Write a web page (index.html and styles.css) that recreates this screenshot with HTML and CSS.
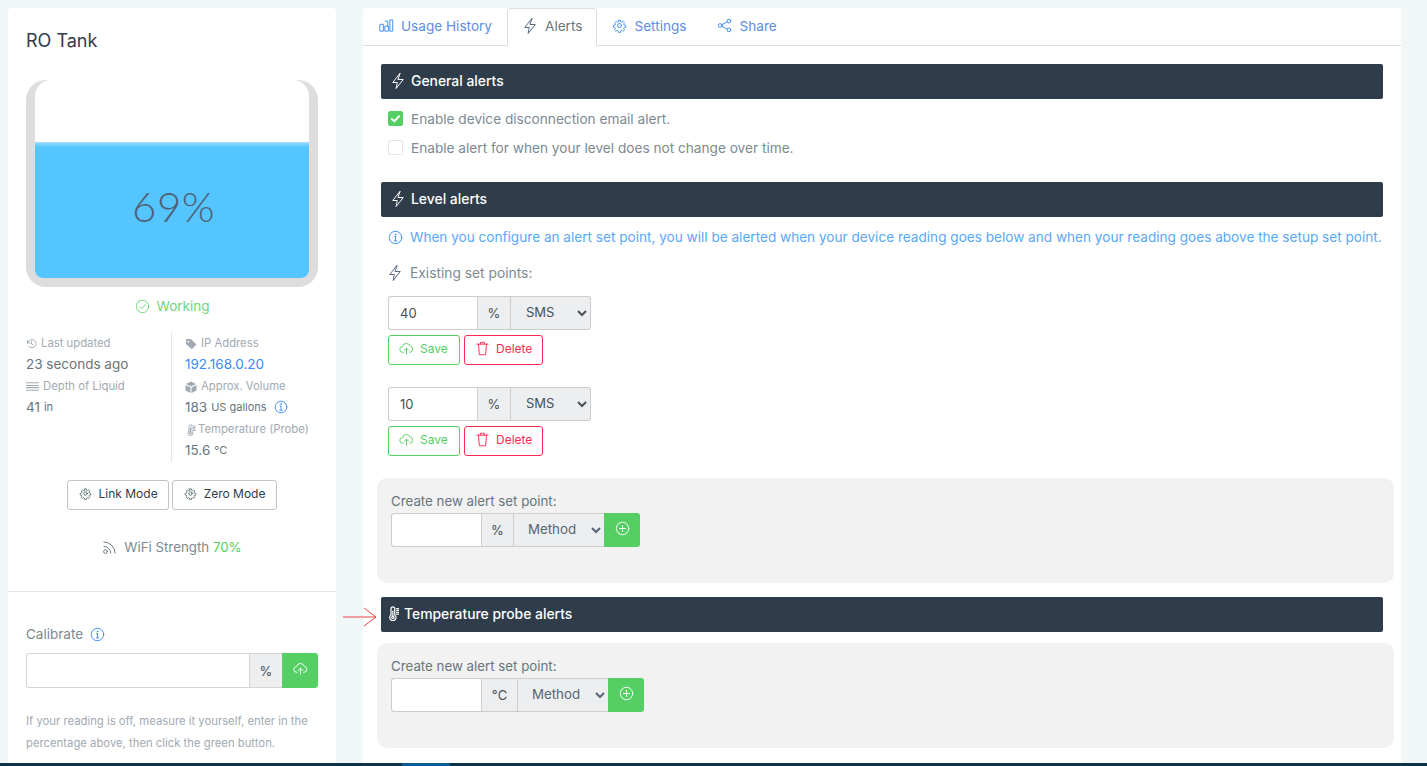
FILE: index.html
```html
<!DOCTYPE html>
<html lang="en">
<head>
<meta charset="utf-8">
<title>RO Tank</title>
<link rel="stylesheet" href="styles.css">
</head>
<body>
<svg class="sprite" width="0" height="0" aria-hidden="true">
  <defs>
    <symbol id="zap" viewBox="0 0 24 24"><path d="M14.500 2 5 14h6l-1.500 8L19 10h-6.500z"/></symbol>
    <symbol id="gear" viewBox="0 0 24 24"><circle cx="12" cy="12" r="3.200"/><path d="M10.300 2.500h3.400l.5 2.900 1.900.8 2.400-1.700 2.400 2.400-1.700 2.400.8 1.900 2.900.5v3.400l-2.900.5-.8 1.900 1.700 2.400-2.400 2.400-2.400-1.700-1.900.8-.5 2.900h-3.400l-.5-2.900-1.900-.8-2.400 1.700-2.400-2.400 1.700-2.400-.8-1.900-2.900-.5v-3.400l2.900-.5.8-1.900L3.700 6.800l2.400-2.400 2.400 1.700 1.900-.8z" transform="translate(1.200 1.200) scale(.9)"/></symbol>
    <symbol id="info" viewBox="0 0 24 24"><circle cx="12" cy="12" r="10"/><path d="M12 11v6M10 17.500h4M10.500 10.500H12"/><circle cx="12" cy="7" r=".6"/></symbol>
    <symbol id="cloud" viewBox="0 0 24 24"><path d="M7 18H6a4.500 4.500 0 0 1-.5-9A6.500 6.500 0 0 1 18 8.500a4.800 4.800 0 0 1 0 9.500h-1"/><path d="M12 21v-9M8.500 15l3.500-3.500 3.500 3.500"/></symbol>
    <symbol id="therm" viewBox="0 0 24 24"><path d="M8 14.500V4.500a3 3 0 0 1 6 0v10a5 5 0 1 1-6 0z"/><circle cx="11" cy="18.500" r="1.800"/><path d="M11 8v9M17 4h3M17 7h3M17 10h3M17 13h3"/></symbol>
  </defs>
</svg>
<div class="layout">
  <aside class="card side">
    <h1 class="title">RO Tank</h1>
    <div class="tank">
      <div class="tank-inner">
        <div class="tank-air"></div>
        <div class="tank-water"><span class="tank-value">69%</span></div>
      </div>
    </div>
    <div class="status">
      <svg class="ic ic-15" viewBox="0 0 24 24"><circle cx="12" cy="12" r="10"/><path d="m7.500 12.500 3 3 6-6.500"/></svg>
      <span>Working</span>
    </div>
    <div class="stats">
      <div class="stat-col">
        <div class="stat-label">
          <svg class="ic ic-11 thick" viewBox="0 0 24 24"><path d="M3 5v6h6"/><path d="M4 11a9 9 0 1 1 2 7"/><path d="M12 7v6l4 2"/></svg>
          Last updated</div>
        <div class="stat-value">23 seconds ago</div>
        <div class="stat-label">
          <svg class="ic ic-13 thick" viewBox="0 0 24 24"><path d="M1 5h22M1 10h22M1 14h22M1 19h22"/></svg>
          Depth of Liquid</div>
        <div class="stat-value">41 <small>in</small></div>
      </div>
      <div class="stat-col stat-right">
        <div class="stat-label">
          <svg class="ic-fill ic-12" viewBox="0 0 24 24"><path d="M2 2h10l11 11-9.500 9.500L2 12zM7 5.500A1.800 1.800 0 1 0 7 9a1.800 1.800 0 0 0 0-3.500z"/></svg>
          IP Address</div>
        <div class="stat-value link">192.168.0.20</div>
        <div class="stat-label">
          <svg class="ic-fill ic-12" viewBox="0 0 24 24"><path d="M12 1 2 6l10 5 10-5zM1 8v11l10 5V13zM23 8v11l-10 5V13z"/></svg>
          Approx. Volume</div>
        <div class="stat-value">183 <small>US gallons</small>
          <svg class="ic ic-14 blue info-gap"><use href="#info"/></svg></div>
        <div class="stat-label tight">
          <svg class="ic ic-12 thick"><use href="#therm"/></svg>
          Temperature (Probe)</div>
        <div class="stat-value">15.6 <small>°C</small></div>
      </div>
    </div>
    <div class="mode-row">
      <button class="mode-btn" type="button"><svg class="ic ic-13 dark"><use href="#gear"/></svg>Link Mode</button>
      <button class="mode-btn" type="button"><svg class="ic ic-13 dark"><use href="#gear"/></svg>Zero Mode</button>
    </div>
    <div class="wifi">
      <svg class="ic ic-15 grey" viewBox="0 0 24 24"><circle cx="5.500" cy="18.500" r="3"/><path d="M3 10a11 11 0 0 1 11 11M3 3a18 18 0 0 1 18 18"/></svg>
      <span>WiFi Strength <b class="good">70%</b></span>
    </div>
    <hr class="side-rule">
    <div class="calibrate">
      <div class="cal-label">Calibrate <svg class="ic ic-15 blue"><use href="#info"/></svg></div>
      <div class="cal-group">
        <input class="cal-input" type="text" aria-label="Calibrate">
        <span class="addon cal-addon">%</span>
        <button class="green-btn cal-btn" type="button" aria-label="Upload"><svg class="ic ic-15 white"><use href="#cloud"/></svg></button>
      </div>
      <p class="help">If your reading is off, measure it yourself, enter in the percentage above, then click the green button.</p>
    </div>
  </aside>

  <main class="card content">
    <nav class="tabs">
      <a class="tab first"><svg class="ic ic-15 blue" viewBox="0 0 24 24"><path d="M2 10h5v11H2zM10 13h5v8h-5zM18 3h4v18h-4zM10 5h4v8"/></svg>Usage History</a>
      <a class="tab active"><svg class="ic ic-zap dark2"><use href="#zap"/></svg>Alerts</a>
      <a class="tab"><svg class="ic ic-15 blue"><use href="#gear"/></svg>Settings</a>
      <a class="tab"><svg class="ic ic-15 blue" viewBox="0 0 24 24"><circle cx="19" cy="5" r="3"/><circle cx="5" cy="12" r="3"/><circle cx="19" cy="19" r="3"/><path d="m8 10.500 8-4M8 13.500l8 4"/></svg>Share</a>
    </nav>
    <div class="pane">
      <h2 class="band"><svg class="ic ic-zap white"><use href="#zap"/></svg>General alerts</h2>
      <label class="check"><span class="box on"><svg class="ic ic-11 white thicker" viewBox="0 0 24 24"><path d="m4 13 5.500 5L20 7"/></svg></span>Enable device disconnection email alert.</label>
      <label class="check"><span class="box"></span>Enable alert for when your level does not change over time.</label>

      <h2 class="band band-level"><svg class="ic ic-zap white"><use href="#zap"/></svg>Level alerts</h2>
      <p class="note"><svg class="ic ic-15 blue"><use href="#info"/></svg>When you configure an alert set point, you will be alerted when your device reading goes below and when your reading goes above the setup set point.</p>
      <p class="existing"><svg class="ic ic-zap dark2"><use href="#zap"/></svg>Existing set points:</p>

      <div class="setpoint">
        <div class="group">
          <input class="g-input" type="text" value="40" aria-label="Set point">
          <span class="addon">%</span>
          <select class="g-select sms" aria-label="Method"><option>SMS</option></select>
        </div>
        <div class="actions">
          <button class="act save" type="button"><svg class="ic ic-15"><use href="#cloud"/></svg>Save</button>
          <button class="act del" type="button"><svg class="ic ic-15" viewBox="0 0 24 24"><path d="M3 5h18M9 5V2h6v3M5.500 5 7 22h10l1.500-17"/></svg>Delete</button>
        </div>
      </div>
      <div class="setpoint">
        <div class="group">
          <input class="g-input" type="text" value="10" aria-label="Set point">
          <span class="addon">%</span>
          <select class="g-select sms" aria-label="Method"><option>SMS</option></select>
        </div>
        <div class="actions">
          <button class="act save" type="button"><svg class="ic ic-15"><use href="#cloud"/></svg>Save</button>
          <button class="act del" type="button"><svg class="ic ic-15" viewBox="0 0 24 24"><path d="M3 5h18M9 5V2h6v3M5.500 5 7 22h10l1.500-17"/></svg>Delete</button>
        </div>
      </div>

      <section class="panel panel-first">
        <div class="panel-label">Create new alert set point:</div>
        <div class="group">
          <input class="g-input new" type="text" aria-label="New set point">
          <span class="addon pct">%</span>
          <select class="g-select method" aria-label="Method"><option>Method</option></select>
          <button class="green-btn add" type="button" aria-label="Add"><svg class="ic ic-15 white" viewBox="0 0 24 24"><circle cx="12" cy="12" r="10"/><path d="M12 7v10M7 12h10"/></svg></button>
        </div>
      </section>

      <h2 class="band band-temp">
        <svg class="arrow" width="34" height="20" viewBox="0 0 34 20"><path d="M0 10h33M21 1l12 9-12 9"/></svg>
        <svg class="ic ic-15 white thick"><use href="#therm"/></svg>Temperature probe alerts</h2>

      <section class="panel panel-second">
        <div class="panel-label">Create new alert set point:</div>
        <div class="group">
          <input class="g-input new" type="text" aria-label="New set point">
          <span class="addon deg">°C</span>
          <select class="g-select method" aria-label="Method"><option>Method</option></select>
          <button class="green-btn add" type="button" aria-label="Add"><svg class="ic ic-15 white" viewBox="0 0 24 24"><circle cx="12" cy="12" r="10"/><path d="M12 7v10M7 12h10"/></svg></button>
        </div>
      </section>
    </div>
  </main>
</div>
<div class="strip"><span class="strip-active"></span></div>
</body>
</html>
```

FILE: styles.css
```css
* { box-sizing: border-box; }
html, body { margin: 0; height: 766px; overflow: hidden; }
body {
  background: #f1f7f7;
  font-family: "Inter", "Noto Sans", sans-serif;
  font-size: 14px;
  color: #67757c;
  display: flex;
  flex-direction: column;
}
.sprite { position: absolute; }
.layout {
  height: 763px;
  padding: 8px 26px 0 8px;
  display: flex;
  gap: 27px;
}
.card { background: #fff; border-radius: 4px 4px 0 0; height: 755px; }
.strip { height: 3px; background: #0d3349; padding-left: 402px; }
.strip-active { display: block; width: 48px; height: 3px; background: #0a5a96; }

.ic { fill: none; stroke: currentColor; stroke-width: 1.5; stroke-linecap: round; stroke-linejoin: round; flex: none; }
.ic-fill { fill: #a1aab2; flex: none; }
.thick { stroke-width: 2; }
.thicker { stroke-width: 4; }
.ic-11 { width: 11px; height: 11px; }
.ic-12 { width: 12px; height: 12px; }
.ic-13 { width: 13px; height: 13px; }
.ic-14 { width: 14px; height: 14px; }
.ic-15 { width: 15px; height: 15px; }
.ic-zap { width: 18px; height: 18px; margin: 0 -1px; stroke-width: 1.300; }
.blue { color: #398bf7; }
.white { color: #fff; }
.dark { color: #455a64; }
.dark2 { color: #54667a; }
.grey { color: #67757c; }

/* sidebar */
.side { width: 328px; flex: none; padding-top: 21px; }
.title { margin: 0 18px; font-size: 18px; font-weight: 400; line-height: 24px; color: #2f3d4a; }
.tank {
  margin: 27px 18px 0;
  height: 207px;
  background: #ddd;
  border-radius: 20px;
  padding: 0 9px 9px;
}
.tank-inner { height: 198px; border-radius: 16px 16px 8px 8px; overflow: hidden; display: flex; flex-direction: column; background: #fff; }
.tank-air { height: 62px; flex: none; }
.tank-water {
  flex: 1;
  background: linear-gradient(#a4dfff, #54c5ff 5px);
  display: flex;
  justify-content: center;
  padding: 36px 0 0 3px;
}
.tank-value { font-family: "Lato", sans-serif; font-weight: 300; font-size: 42px; line-height: 56px; color: #4f6076; letter-spacing: .5px; }
.status { margin-top: 9px; height: 20px; display: flex; align-items: center; justify-content: center; gap: 7px; color: #55ce63; opacity: .85; font-size: 13.500px; }
.stats { margin: 16px 18px 0; display: flex; height: 130px; }
.stat-col { width: 145px; flex: none; }
.stat-right { border-left: 1px solid #e6e6e6; padding-left: 13px; width: 147px; }
.stat-label { font-size: 11.300px; padding-top: 2px; line-height: 19.500px; color: #a1aab2; display: flex; align-items: center; gap: 4px; white-space: nowrap; }
.stat-label.tight { gap: 1px; }
.stat-value { font-size: 13.500px; line-height: 21.500px; color: #67757c; white-space: nowrap; display: flex; align-items: center; gap: 4px; }
.stat-value small { font-size: 11px; }
.link { color: #398bf7; }
.info-gap { margin-left: 3px; }
.mode-row { margin-top: 18px; display: flex; justify-content: center; gap: 3px; }
.mode-btn {
  height: 30px;
  padding: 0 10.500px 3px;
  background: #fff;
  border: 1px solid #c4c4c4;
  border-radius: 3px;
  font: 12px "Inter", sans-serif;
  color: #2f3d4a;
  display: flex;
  align-items: center;
  gap: 7px;
}
.wifi { margin-top: 27px; height: 20px; display: flex; align-items: center; justify-content: center; gap: 7px; color: #7c8a92; font-size: 13.300px; }
.good { color: #55ce63; font-weight: 400; }
.side-rule { border: 0; border-top: 1px solid #e6e6e6; margin: 34px 0 0; }
.calibrate { padding: 32px 18px 0; }
.cal-label { height: 20px; display: flex; align-items: center; gap: 7px; color: #7c8a92; font-size: 13.500px; }
.cal-group { margin-top: 9px; display: flex; height: 35px; }
.cal-input { flex: 1; min-width: 0; border: 1px solid #d5d5d5; border-radius: 3px 0 0 3px; border-right: 0; }
.addon {
  background: #eceef0;
  border: 1px solid #ccc;
  color: #495057;
  font-size: 13px;
  display: flex;
  align-items: center;
  justify-content: center;
  width: 34px;
  flex: none;
}
.addon.pct { width: 33px; }
.addon.deg { width: 37px; }
.cal-addon { width: 33px; border-width: 1px 0 1px 1px; border-color: #d5d5d5; }
.green-btn { background: #55ce63; border: 0; display: flex; align-items: center; justify-content: center; padding: 0 0 4px; border-radius: 0 3px 3px 0; flex: none; }
.cal-btn { width: 36px; }
.help { margin: 22px 0 0; font-size: 11.300px; line-height: 22px; color: #a1aab2; }

/* tabs */
.content { width: 1038px; flex: none; }
.tabs { height: 38px; display: flex; border-bottom: 1px solid #ddd; }
.tab { height: 37px; padding: 0 15px 2px 14px; display: flex; align-items: center; gap: 7px; color: #5e8ee0; font-size: 13.600px; border: 1px solid transparent; white-space: nowrap; }
.tab.first { padding: 0 14px 2px 15px; }
.tab.active { height: 38px; padding-right: 14px; color: #67757c; background: #fff; border-color: #ddd #ddd #fff; border-radius: 4px 4px 0 0; }

/* pane */
.pane { padding: 18px 18px 0; }
.band {
  height: 35px;
  margin: 0;
  padding: 0 0 2px 9px;
  background: #2f3d4a;
  border-radius: 2px;
  color: #fff;
  font-size: 13.900px;
  font-weight: 500;
  display: flex;
  align-items: center;
  gap: 5px;
  position: relative;
}
.band-level { margin-top: 25px; }
.band-temp { margin-top: 14px; padding-left: 5px; gap: 3px; }
.arrow { position: absolute; left: -38px; top: 10px; fill: none; stroke: #ee4444; stroke-width: 1; }
.check { display: flex; align-items: center; gap: 8px; margin: 10px 0 0 7px; height: 19px; color: #7c8a92; font-size: 13.650px; }
.check + .check { margin-top: 10px; }
.box { width: 15px; height: 15px; border: 1px solid #e6e6e6; border-radius: 2px; display: flex; align-items: center; justify-content: center; }
.box.on { background: #55ce63; border-color: #55ce63; }
.note { margin: 11px 0 0 7px; height: 18px; display: flex; align-items: center; gap: 7px; color: #5aa8f5; font-size: 13.600px; white-space: nowrap; }
.existing { margin: 17px 0 0 6px; height: 20px; display: flex; align-items: center; gap: 7px; color: #7c8a92; font-size: 13.800px; }
.setpoint { margin: 13px 0 0 7px; }
.setpoint + .setpoint { margin-top: 22px; }
.group { display: flex; height: 34px; }
.g-input { width: 89px; border: 1px solid #ccc; border-right: 0; border-radius: 3px 0 0 3px; padding: 0 11px; font: 13px "Inter", sans-serif; color: #495057; background: #fff; }
.g-select {
  height: 34px;
  border: 1px solid #ccc;
  border-left: 0;
  background: #eceef0;
  color: #495057;
  font: 13px "Inter", sans-serif;
  padding: 0 0 2px 10px;
}
.sms { width: 80px; border-radius: 0 3px 3px 0; padding-left: 11px; }
.method { width: 90px; color: #54667a; border-right: 0; font-size: 13.300px; }
.actions { margin-top: 5px; display: flex; gap: 4px; }
.act {
  height: 30px;
  padding: 0 10px 3px;
  background: #fff;
  border-radius: 3px;
  font: 12px "Inter", sans-serif;
  display: flex;
  align-items: center;
  gap: 6px;
}
.save { width: 72px; border: 1px solid #55ce63; color: #55ce63; }
.del { width: 79px; border: 1px solid #f62d51; color: #f62d51; }
.panel { height: 105px; margin: 0 -11px 0 -4px; padding: 13px 14px 0; background: #f2f2f2; border-radius: 10px; }
.panel-first { margin-top: 22px; }
.panel-second { margin-top: 11px; }
.panel-label { font-size: 13.300px; line-height: 20px; margin-bottom: 2px; color: #67757c; }
.g-input.new { width: 90px; }
.add { width: 36px; }
```
